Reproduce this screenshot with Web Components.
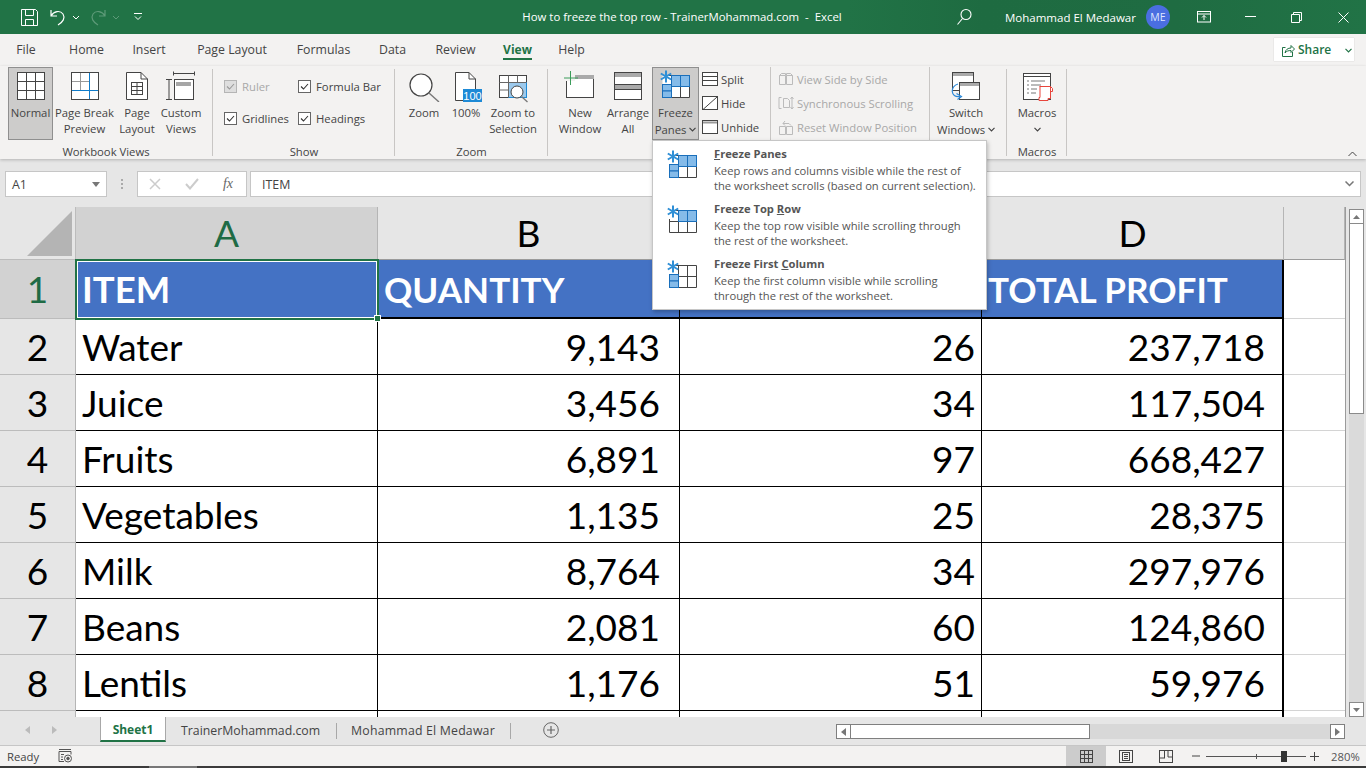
<!DOCTYPE html>
<html>
<head>
<meta charset="utf-8">
<title>How to freeze the top row</title>
<style>
  html, body { margin: 0; height: 100%; overflow: hidden; }
  body { font-family: "Open Sans", "Noto Sans", sans-serif; font-size: 12px; color: #444; background: #e6e6e6; width: 1366px; height: 768px; position: relative; }
  svg { display: block; }
</style>
</head>
<body>
<x-titlebar></x-titlebar>
<x-rtabs></x-rtabs>
<x-ribbon>
  <x-group label="Workbook Views" style="width:205px;margin-left:8px;--lr:9px">
    <x-rbtn w="45" on>
      <svg slot="icon" width="32" height="32" fill="none" stroke="#444"><rect x="2.500" y="2.500" width="27" height="27" fill="#fff"/><path d="M11.500 3v26M20.500 3v26M3 11.500h26M3 20.500h26"/></svg>
      Normal</x-rbtn>
    <x-rbtn w="61" style="margin-left:1px">
      <svg slot="icon" width="32" height="32" fill="none" stroke="#444"><rect x="2.500" y="2.500" width="27" height="27" fill="#fff"/><path d="M11.500 3v17M3 11.500h17" stroke="#999"/><path d="M20.500 3v26M3 20.500h26" stroke="#0f7bc9"/></svg>
      Page Break<br>Preview</x-rbtn>
    <x-rbtn w="44">
      <svg slot="icon" width="32" height="32" fill="none" stroke="#444"><path d="M5.500 2.500H20L26.500 9V29.500H5.500Z" fill="#fff"/><path d="M20 2.500V9H26.500"/><rect x="10.500" y="12.500" width="11" height="12"/><path d="M10.500 16.500h11M10.500 20.500h11M16 12.500v12"/></svg>
      Page<br>Layout</x-rbtn>
    <x-rbtn w="44">
      <svg slot="icon" width="32" height="32" fill="none" stroke="#444"><path d="M8.500 1.500v4M29.500 1.500v4M8.500 3.500h21M1 9.500h6M1 29.500h6M4 9.500v20"/><rect x="9.500" y="9.500" width="19" height="20" fill="#fff"/><rect x="11" y="12" width="15" height="4" fill="#a6a6a6" stroke="none"/></svg>
      Custom<br>Views</x-rbtn>
  </x-group>
  <x-group label="Show" style="width:182px">
    <x-checks></x-checks>
  </x-group>
  <x-group label="Zoom" style="width:153px;padding-left:7px">
    <x-rbtn w="44">
      <svg slot="icon" width="32" height="32" fill="none" stroke="#444"><circle cx="13" cy="15" r="11" fill="#fff" stroke-width="1.200"/><path d="M21 23l10 9" stroke="#777" stroke-width="1.400"/></svg>
      Zoom</x-rbtn>
    <x-rbtn w="40">
      <svg slot="icon" width="32" height="32" fill="none" stroke="#444" style="overflow:visible"><path d="M13 30.500H5.500V2.500H19L25.500 9V19" fill="#fff"/><path d="M19 2.500V9H25.500"/><rect x="13" y="19" width="19" height="13" fill="#1e8ad6" stroke="none"/><text x="22.500" y="29.500" text-anchor="middle" font-size="11" fill="#fff" stroke="none" font-family="Liberation Sans">100</text></svg>
      100%</x-rbtn>
    <x-rbtn w="54">
      <svg slot="icon" width="32" height="32" fill="none" stroke="#444" style="overflow:visible"><rect x="2.500" y="5.500" width="27" height="22" fill="#fff"/><rect x="11.500" y="12.500" width="18" height="15" fill="#9cc9ec" stroke="#1e8ad6"/><path d="M2.500 12.500h27M2.500 20h9M11.500 5.500v22M20.500 5.500v7" stroke="#666"/><circle cx="20" cy="22" r="6" fill="#fff"/><path d="M24.500 26.500l6 5.500" stroke="#777" stroke-width="1.300"/></svg>
      Zoom to<br>Selection</x-rbtn>
  </x-group>
  <x-group label="" style="width:459px;padding-left:8px">
    <x-rbtn w="48">
      <svg slot="icon" width="32" height="32" fill="none" stroke="#444"><rect x="2.500" y="5.500" width="27" height="22" fill="#fff"/><rect x="11" y="5" width="19" height="4" fill="#aaa" stroke="none"/><rect x="0" y="0" width="11" height="11" fill="#f3f2f1" stroke="none"/><path d="M6.500 1v14M0 8h14" stroke="#3b9c5a"/></svg>
      New<br>Window</x-rbtn>
    <x-rbtn w="48">
      <svg slot="icon" width="32" height="32" fill="none" stroke="#444"><rect x="2.500" y="2.500" width="27" height="27" fill="#fff"/><rect x="3" y="3" width="26" height="4" fill="#aaa" stroke="none"/><rect x="3" y="15" width="26" height="4" fill="#aaa" stroke="none"/><path d="M3 14.500h26M3 19.500h26"/></svg>
      Arrange<br>All</x-rbtn>
    <x-rbtn w="47" on id="freeze"><x-freeze-icon slot="icon" kind="both"></x-freeze-icon>Freeze<br>Panes <x-chev></x-chev></x-rbtn>
    <x-small-col style="width:68px;padding-left:3px;border-right:1px solid #c8c6c4;height:78px">
      <x-sbtn label="Split"><svg slot="icon" width="16" height="14" fill="none" stroke="#444"><rect x=".5" y=".5" width="15" height="13" fill="#fff"/><path d="M1 4.500h14M1 8.500h14"/></svg></x-sbtn>
      <x-sbtn label="Hide"><svg slot="icon" width="16" height="14" fill="none" stroke="#444"><rect x=".5" y=".5" width="15" height="13" fill="#fff"/><path d="M1 13.500L15 1"/></svg></x-sbtn>
      <x-sbtn label="Unhide"><svg slot="icon" width="16" height="14" fill="none" stroke="#444"><rect x=".5" y=".5" width="15" height="13" fill="#fff"/><path d="M1 2.500h14" stroke="#999" stroke-width="2"/></svg></x-sbtn>
    </x-small-col>
    <x-small-col style="width:151px;padding-left:7px;border-right:1px solid #c8c6c4;height:78px;color:#a8a8a8">
      <x-sbtn label="View Side by Side" off><svg slot="icon" width="16" height="14" fill="none" stroke="#bbb"><path d="M1.500 3.500h6v9h-6zM8.500 3.500h6v9h-6zM1.500 3.500l2-2h4v2M8.500 3.500v-2h4l2 2"/></svg></x-sbtn>
      <x-sbtn label="Synchronous Scrolling" off><svg slot="icon" width="16" height="14" fill="none" stroke="#bbb"><path d="M3.500 1.500H1v11h2.500M5.500 2.500h4l2 2v7h-6zM14 1v12M12.500 3L14 1l1.500 2M12.500 11l1.500 2 1.500-2"/></svg></x-sbtn>
      <x-sbtn label="Reset Window Position" off><svg slot="icon" width="16" height="16" fill="none" stroke="#bbb"><path d="M1.500 7.500h6v8h-6zM8.500 7.500h6v8h-6zM5 4.500h6l2 2M5 4.500l2-2.500M5 4.500l2 2"/></svg></x-sbtn>
    </x-small-col>
    <x-rbtn w="60" style="margin-left:6px">
      <svg slot="icon" width="32" height="32" fill="none" stroke="#444"><rect x="2.500" y="2.500" width="21" height="18" fill="#fff"/><rect x="3" y="3" width="20" height="3" fill="#aaa" stroke="none"/><rect x="9.500" y="12.500" width="20" height="17" fill="#fff"/><rect x="10" y="13" width="19" height="3" fill="#aaa" stroke="none"/><path d="M8 14C0 16 0 28 10 26.500M6.500 23.500l5 3-4 3" stroke="#2b88d8" stroke-width="1.200"/></svg>
      Switch<br>Windows <x-chev></x-chev></x-rbtn>
  </x-group>
  <x-group label="Macros" style="width:60px;padding-left:8px">
    <x-rbtn w="44">
      <svg slot="icon" width="32" height="32" fill="none" stroke="#444"><rect x="2.500" y="3.500" width="27" height="26" fill="#fff"/><path d="M3 6.500h26" /><path d="M6 11h2M10 11h14M6 15h2M10 15h10M6 19h2M10 19h6M6 23h2M10 23h5" stroke="#777"/><path d="M18.500 16.500h11l2 2v3h-2M19 16.500v11h-1v3h9v-2h2.500v-12" fill="#fff" stroke="#e8453c"/></svg>
      Macros<br><x-chev></x-chev></x-rbtn>
  </x-group>
</x-ribbon>
<x-formula-bar name="A1" value="ITEM"></x-formula-bar>
<x-workspace></x-workspace>
<x-sheet-tabs></x-sheet-tabs>
<x-status></x-status>
<x-menu>
  <x-menu-item kind="both"><span slot="title"><u>F</u>reeze Panes</span>Keep rows and columns visible while the rest of<br>the worksheet scrolls (based on current selection).</x-menu-item>
  <x-menu-item kind="top"><span slot="title">Freeze Top <u>R</u>ow</span>Keep the top row visible while scrolling through<br>the rest of the worksheet.</x-menu-item>
  <x-menu-item kind="left"><span slot="title">Freeze First <u>C</u>olumn</span>Keep the first column visible while scrolling<br>through the rest of the worksheet.</x-menu-item>
</x-menu>

<script>
function el(name, html) {
  customElements.define(name, class extends HTMLElement {
    constructor() {
      super();
      this.attachShadow({mode: 'open'});
      this.shadowRoot.innerHTML = typeof html === 'function' ? html(this) : html;
    }
  });
}

const chevron = c => `<svg width="7" height="5" fill="none" stroke="${c}" stroke-width="1.200" style="display:inline-block;vertical-align:middle"><path d="M.5 .8L3.500 3.800 6.500 .8"/></svg>`;

el('x-chev', `<style>:host{display:inline-block;vertical-align:1px}</style>${chevron('#444')}`);

el('x-titlebar', `
<style>
  :host{display:flex;align-items:center;height:34px;color:#fff;position:relative;
    background:linear-gradient(90deg,#217346 0,#217346 62%,#1e6b41 72%,#1f6c42 86%,#217346 100%)}
  svg{display:block;flex:none}
  .title{position:absolute;left:522px;top:0;width:320px;line-height:34px;font-size:11.400px;white-space:pre;text-align:center}
  .user{font-size:11.500px;white-space:nowrap;width:141px}
  .av{width:24px;height:24px;border-radius:50%;background:#4a6ee0;font-size:10.500px;text-align:center;line-height:24px;flex:none;color:#dfe6ff}
</style>
<svg width="21" height="18" style="margin-left:19px" fill="none" stroke="#fff"><path d="M2.500 1.500H16.500L18.500 3.500V17.500H2.500ZM6.500 2V7.500H14.500V2M6.500 17V11.500H14.500V17" /></svg>
<svg width="18" height="18" style="margin-left:9px" fill="none" stroke="#fff" stroke-width="1.200"><path d="M2 2V8H8M2 8C5 3 11 2 14 6C16.500 10 14 14 9 17"/></svg>
<svg width="8" height="5" style="margin-left:5px" fill="none" stroke="#fff"><path d="M1 1L4 4 7 1"/></svg>
<svg width="18" height="18" style="margin-left:9px" fill="none" stroke="#5d9a78" stroke-width="1.200"><path d="M16 2V8H10M16 8C13 3 7 2 4 6C1.500 10 4 14 9 17"/></svg>
<svg width="8" height="5" style="margin-left:5px" fill="none" stroke="#5d9a78"><path d="M1 1L4 4 7 1"/></svg>
<svg width="8" height="8" style="margin-left:14px" fill="none" stroke="#fff"><path d="M0 .5H8M1 3.500L4 6.500 7 3.500"/></svg>
<div class="title">How to freeze the top row - TrainerMohammad.com  -  Excel</div>
<div style="flex:1"></div>
<svg width="16" height="18" fill="none" stroke="#fff" stroke-width="1.100" style="margin-right:33px"><circle cx="10" cy="6.500" r="5"/><path d="M6.500 10.500L1.500 16.500"/></svg>
<div class="user">Mohammad El Medawar</div>
<div class="av">ME</div>
<svg width="14" height="12" fill="none" stroke="#fff" style="margin-left:27px"><rect x=".5" y=".5" width="13" height="10.500"/><path d="M1 3h12M7 9V4.500M5 6.500L7 4.500 9 6.500"/></svg>
<svg width="11" height="2" style="margin-left:34px" fill="none" stroke="#fff"><path d="M0 .5H11"/></svg>
<svg width="11" height="11" style="margin-left:35px" fill="none" stroke="#fff"><path d="M.5 2.500H8.500V10.500H.5ZM2.500 2.500V.5H10.500V8.500H8.500"/></svg>
<svg width="11" height="11" style="margin-left:36px;margin-right:17px" fill="none" stroke="#fff"><path d="M.5 .5L10.500 10.500M10.500 .5L.5 10.500"/></svg>
`);

el('x-rtabs', () => {
  const tabs = [['File',52],['Home',69],['Insert',56],['Page Layout',110],['Formulas',73],['Data',65],['Review',61],['View',63],['Help',45]];
  return `
<style>
  :host{display:flex;height:32px;background:#f3f2f1;position:relative}
  div{line-height:32px;text-align:center;color:#444;font-size:12.300px;position:relative}
  .on{color:#217346;font-weight:700;font-size:12px}
  .on::after{content:"";position:absolute;left:17px;right:17px;bottom:6px;height:2px;background:#217346}
  .share{position:absolute;left:1274px;top:4px;width:80px;height:23px;background:#fff;box-shadow:0 0 1px #bbb;display:flex;align-items:center;color:#217346;font-size:12px;font-weight:600;box-sizing:border-box;padding-left:7px;gap:3px}
</style>
${tabs.map(t => `<div class="${t[0] === 'View' ? 'on' : ''}" style="width:${t[1]}px">${t[0]}</div>`).join('')}
<section class="share"><svg width="14" height="14" fill="none" stroke="#217346"><path d="M4.500 4.500H1.500V13.500H11.500V9M4 10C4.500 6.500 7 5 10 5V2.500L13.500 6 10 9.500V7.500C7.500 7.500 5.500 8 4 10Z"/></svg>Share<span style="margin-left:11px">${chevron('#217346')}</span></section>`;
});

el('x-ribbon', `
<style>
  :host{display:flex;height:93px;background:#f3f2f1;box-sizing:border-box;position:relative;box-shadow:0 1px 3px rgba(0,0,0,.22);z-index:1}
  svg{position:absolute;left:1348px;top:85px}
</style>
<slot></slot>
<svg width="9" height="6" fill="none" stroke="#444"><path d="M.5 5L4.500 1 8.500 5"/></svg>`);

el('x-group', h => `
<style>
  :host{display:block;box-sizing:border-box;position:relative;flex:none;height:93px}
  .c{display:flex;padding-top:1px;height:90px;box-sizing:border-box}
  .l{position:absolute;left:0;right:var(--lr,0);top:78px;text-align:center;font-size:11.300px;line-height:16px;color:#444}
  .s{position:absolute;right:0;top:3px;height:87px;width:1px;background:#c8c6c4}
</style>
<div class="c"><slot></slot></div>
${h.getAttribute('label') ? `<div class="l">${h.getAttribute('label')}</div>` : ''}
<div class="s"></div>`);

el('x-rbtn', h => `
<style>
  :host{display:block;width:${h.getAttribute('w')}px;height:73px;box-sizing:border-box;flex:none;text-align:center;font-size:11.300px;line-height:16px;color:#444;white-space:nowrap;
    ${h.hasAttribute('on') ? 'background:#cdcccb;outline:1px solid #8f8f8f;outline-offset:-1px;' : ''}}
  .i{display:flex;justify-content:center;padding-top:3px;height:38px;box-sizing:border-box;}
</style>
<div class="i"><slot name="icon"></slot></div>
<slot></slot>`);

el('x-checks', () => {
  const ck = (label, off) => `<label style="color:${off ? '#a8a8a8' : '#444'}"><svg width="13" height="13" fill="${off ? '#dedede' : '#fff'}" stroke="${off ? '#b5b5b5' : '#666'}"><rect x=".5" y=".5" width="12" height="12"/><path d="M3 6.500L5.500 9 10 4" fill="none" stroke="${off ? '#999' : '#333'}" stroke-width="1.100"/></svg><span>${label}</span></label>`;
  return `
<style>
  :host{display:grid;grid-template-columns:74px auto;grid-auto-rows:32px;padding:3px 0 0 11px;align-items:center;height:64px;font-size:11.300px}
  label{display:flex;align-items:center;gap:5px;white-space:nowrap}
  svg{display:block}
</style>
${ck('Ruler', true)}${ck('Formula Bar')}${ck('Gridlines')}${ck('Headings')}`;
});

el('x-small-col', `<style>:host{display:flex;flex-direction:column;flex:none;box-sizing:content-box}</style><slot></slot>`);

el('x-sbtn', h => `
<style>
  :host{display:flex;align-items:center;height:24px;gap:3px;font-size:11.300px;white-space:nowrap;color:${h.hasAttribute('off') ? '#a8a8a8' : '#444'}}
  ::slotted(svg){display:block;flex:none}
</style>
<slot name="icon"></slot><span>${h.getAttribute('label')}</span>`);

el('x-freeze-icon', h => {
  const k = h.getAttribute('kind');
  const bl = '#85bbe9', ln = '#1a6fbb', dk = '#444';
  const top = k === 'both' || k === 'top', left = k === 'both' || k === 'left';
  return `
<style>:host{display:block;width:32px;height:32px}svg{display:block}</style>
<svg width="32" height="32" fill="none">
  <rect x="2.500" y="5.500" width="27" height="22" fill="#fff" stroke="none"/>
  <path d="M2.500 16.500h27M2.500 27.500h27M29.500 5.500v22M2.500 14v13.500M11.500 5.500v22M20.500 5.500v22M9 5.500h20.500" stroke="${dk}"/>
  ${top ? `<rect x="11.500" y="5.500" width="9" height="11" fill="${bl}" stroke="${ln}"/><rect x="20.500" y="5.500" width="9" height="11" fill="${bl}" stroke="${ln}"/>` : ''}
  ${left ? `<rect x="2.500" y="14.500" width="9" height="6.500" fill="${bl}" stroke="${ln}"/><rect x="2.500" y="21" width="9" height="6.500" fill="${bl}" stroke="${ln}"/>` : ''}
  <path d="M6 .5v12M.8 3.500l10.400 6M.8 9.500l10.400-6" stroke="#2f8fd6" stroke-width="2"/>
</svg>`;
});

el('x-formula-bar', h => `
<style>
  :host{display:flex;height:48px;box-sizing:border-box;padding:12px 5px 10px 5px;background:#e6e6e6;font-size:12.400px;color:#444}
  .b{background:#fff;border:1px solid #c6c6c6;box-sizing:border-box;height:26px;display:flex;align-items:center}
  .name{width:102px;padding-left:6px;justify-content:space-between;padding-right:6px}
  .dots{width:30px;display:flex;flex-direction:column;align-items:center;justify-content:center;gap:2px}
  .dots i{width:2px;height:2px;background:#aaa;display:block}
  .fx{width:110px;justify-content:space-between;padding:0 13px 0 11px;font-family:"Liberation Serif",serif;font-style:italic;font-size:14px;color:#666;margin-right:3px}
  .v{flex:1;padding:0 6px 0 11px;justify-content:space-between}
</style>
<div class="b name"><span>${h.getAttribute('name')}</span><svg width="8" height="5"><path d="M0 0H8L4 5Z" fill="#777"/></svg></div>
<div class="dots"><i></i><i></i><i></i></div>
<div class="b fx"><svg width="12" height="12" fill="none" stroke="#ccc" stroke-width="1.500"><path d="M1 1L11 11M11 1L1 11"/></svg><svg width="14" height="12" fill="none" stroke="#ccc" stroke-width="2"><path d="M1 6L5 10.500 13 1"/></svg><span>fx</span></div>
<div class="b v"><span>${h.getAttribute('value')}</span><svg width="9" height="6" fill="none" stroke="#777" stroke-width="1.500"><path d="M.5 .5L4.500 4.500 8.500 .5"/></svg></div>`);

el('x-workspace', `
<style>
  :host{display:flex;height:510px;background:#e6e6e6}
  .bar{width:15px;margin:2px 0 0 3px;display:flex;flex-direction:column;background:#dadada;flex:none}
  .btn{height:15px;background:#fff;border:1px solid #8a8a8a;box-sizing:border-box;display:flex;align-items:center;justify-content:center;flex:none}
  .th{height:190px;background:#fff;border:1px solid #8a8a8a;border-top-width:0;box-sizing:border-box;flex:none}
</style>
<x-sheet></x-sheet>
<div class="bar">
  <div class="btn"><svg width="7" height="4"><path d="M0 4H7L3.500 0Z" fill="#777"/></svg></div>
  <div class="th"></div>
  <div style="flex:1"></div>
  <div class="btn"><svg width="7" height="4"><path d="M0 0H7L3.500 4Z" fill="#777"/></svg></div>
</div>`);

el('x-sheet', () => {
  const rows = [['Water','9,143','26','237,718'],['Juice','3,456','34','117,504'],['Fruits','6,891','97','668,427'],['Vegetables','1,135','25','28,375'],['Milk','8,764','34','297,976'],['Beans','2,081','60','124,860'],['Lentils','1,176','51','59,976'],['','','','']];
  let h = `<div class="corner"><svg width="75" height="52"><path d="M27 49L72 4V49Z" fill="#b4b4b4"/></svg></div>`;
  // column C's header and title sit under the open menu, so they stay empty
  ['A','B','','D',''].forEach((c, i) => h += `<div class="ch${i === 0 ? ' sel' : ''}">${c}</div>`);
  h += `<div class="rh sel">1</div><div class="c hd a1">ITEM</div><div class="c hd">QUANTITY</div><div class="c hd"></div><div class="c hd last">TOTAL PROFIT</div><div class="c e"></div>`;
  rows.forEach((r, i) => {
    h += `<div class="rh">${r[0] ? i + 2 : ''}</div><div class="c t">${r[0]}</div><div class="c n b">${r[1]}</div><div class="c n m">${r[2]}</div><div class="c n last">${r[3]}</div><div class="c e"></div>`;
  });
  return `
<style>
  :host{display:grid;grid-template-columns:76px 302px 302px 302px 302px 61px;grid-template-rows:53px 59px repeat(8,56px);
    width:1346px;height:510px;overflow:hidden;flex:none;font-family:"Lato","Open Sans",sans-serif;color:#000;font-size:37px;box-sizing:border-box;border-right:1px solid #9b9b9b}
  .corner{background:#e6e6e6;border-right:1px solid #bcbcbc;border-bottom:1px solid #bcbcbc;box-sizing:border-box}
  .ch{background:#e6e6e6;border-right:1px solid #b5b5b5;box-sizing:border-box;text-align:center;line-height:51px;border-bottom:1px solid #9b9b9b}
  .ch.sel{background:#d2d2d2;color:#1f6b45}
  .rh{background:#e6e6e6;border-right:1px solid #b5b5b5;border-bottom:1px solid #bcbcbc;box-sizing:border-box;text-align:center;line-height:56px}
  .rh.sel{background:#d2d2d2;color:#1f6b45;line-height:58px}
  .c{box-sizing:border-box;background:#fff;line-height:56px;white-space:nowrap;border-right:1px solid #000;border-bottom:1px solid #000;position:relative}
  .t{padding-left:6px}
  .n{text-align:right;padding-right:17px}
  .n.b{padding-right:19px}
  .n.m{padding-right:6px}
  .hd{background:#4472c4;color:#fff;font-weight:700;font-size:35.100px;padding-left:6px;line-height:58px;border-bottom:2px solid #000}
  .hd.a1{font-size:36.500px}
  .last{border-right:2px solid #000}
  .e{border-right:0;border-bottom:1px solid #d4d4d4}
  .a1{outline:2px solid #217346;outline-offset:-1px;box-shadow:inset 0 0 0 2px #fff;z-index:2;border:0}
  .a1::after{content:"";position:absolute;right:-3px;bottom:-3px;width:5px;height:5px;background:#217346;border:1px solid #fff;box-sizing:content-box;}
</style>${h}`;
});

el('x-sheet-tabs', `
<style>
  :host{display:flex;height:28px;background:#e6e6e6;position:relative;font-size:12.300px;color:#444;align-items:flex-start}
  .nav{width:100px;height:25px;display:flex;align-items:center;padding-left:25px;gap:22px;box-sizing:border-box;flex:none}
  .on{width:66px;height:25px;background:#fff;border:1px solid #a8a8a8;border-width:0 1px;border-bottom:2px solid #217346;box-sizing:border-box;text-align:center;line-height:26px;color:#217346;font-weight:700;flex:none;font-size:12px}
  .t{height:16px;margin-top:6px;line-height:16px;padding:0 16px 0 15px;border-right:1px solid #a8a8a8;flex:none;white-space:nowrap}
  .scroll{position:absolute;left:836px;top:7px;width:509px;height:15px;background:#d8d8d8;display:flex}
  .sb{width:15px;height:15px;background:#fff;border:1px solid #7f7f7f;box-sizing:border-box;flex:none;display:flex;align-items:center;justify-content:center}
  .th{width:239px;background:#fff;border:1px solid #7f7f7f;border-left:0;box-sizing:border-box}
</style>
<div class="nav"><svg width="5" height="8"><path d="M5 0V8L0 4Z" fill="#bbb"/></svg><svg width="5" height="8"><path d="M0 0V8L5 4Z" fill="#bbb"/></svg></div>
<div class="on">Sheet1</div>
<div class="t">TrainerMohammad.com</div>
<div class="t" style="padding-left:14px;padding-right:15px;letter-spacing:.2px">Mohammad El Medawar</div>
<svg width="16" height="16" fill="none" stroke="#666" style="margin:5px 0 0 32px"><circle cx="8" cy="8" r="7.300"/><path d="M8 4v8M4 8h8" stroke-width="1.200"/></svg>
<div class="scroll">
  <div class="sb"><svg width="5" height="8"><path d="M5 0V8L0 4Z" fill="#777"/></svg></div>
  <div class="th"></div><div style="flex:1"></div>
  <div class="sb"><svg width="5" height="8"><path d="M0 0V8L5 4Z" fill="#777"/></svg></div>
</div>`);

el('x-status', `
<style>
  :host{display:flex;height:23px;box-sizing:border-box;background:#f3f2f1;border-top:1px solid #c6c6c6;border-bottom:2px solid #3b3b3b;font-size:11.300px;color:#444;align-items:center;position:relative}
  .v{height:20px;width:40px;display:flex;align-items:center;justify-content:center;flex:none}
  .lite{position:absolute;left:149px;width:48px;bottom:-2px;height:2px;background:#777}
</style>
<span style="margin-left:7px;width:51px">Ready</span>
<svg width="14" height="14" fill="none" stroke="#555"><path d="M1 .5h12M1 2.500h12v3M1 2.500v10h5M3 5.500h3M3 8h2M3 10.500h2"/><circle cx="10" cy="9.500" r="3.500"/><circle cx="10" cy="9.500" r="1.300" fill="#555"/></svg>
<div style="flex:1"></div>
<div class="v" style="background:#ccc"><svg width="13" height="13" fill="none" stroke="#444"><rect x=".5" y=".5" width="12" height="12"/><path d="M4.500 1v11M8.500 1v11M1 4.500h11M1 8.500h11"/></svg></div>
<div class="v"><svg width="14" height="13" fill="none" stroke="#444"><rect x=".5" y=".5" width="13" height="12"/><rect x="3.500" y="2.500" width="7" height="8"/><path d="M5 4.500h4M5 6.500h4M5 8.500h4" /></svg></div>
<div class="v"><svg width="14" height="13" fill="none" stroke="#444"><rect x=".5" y=".5" width="13" height="12"/><path d="M5.500 1v7M1 8h5M9 1v6h4.500"/></svg></div>
<svg width="8" height="2" style="margin-left:6px"><path d="M0 1H8" stroke="#444"/></svg>
<div style="margin-left:6px;width:100px;height:1px;background:#555;position:relative;flex:none">
  <i style="position:absolute;left:50px;top:-2px;width:1px;height:5px;background:#555"></i>
  <i style="position:absolute;left:75px;top:-5px;width:6px;height:11px;background:#333"></i>
</div>
<svg width="9" height="9" style="margin-left:4px"><path d="M4.500 0V9M0 4.500H9" stroke="#444"/></svg>
<span style="margin:0 8px 0 12px;width:27px;color:#555;text-align:right;white-space:nowrap">280%</span>
<div class="lite"></div>`);

el('x-menu', `
<style>
  :host{display:block;position:absolute;left:652px;top:140px;width:335px;height:170px;background:#fff;border:1px solid #c6c6c6;box-sizing:border-box;box-shadow:1px 2px 4px rgba(0,0,0,.25);z-index:5;padding-top:3px}
</style>
<slot></slot>`);

el('x-menu-item', h => `
<style>
  :host{display:flex;height:55px;box-sizing:border-box;color:#555;font-size:11.200px;line-height:15px;white-space:nowrap}
  .i{width:61px;padding:6px 0 0 14px;box-sizing:border-box;flex:none}
  .tt{font-weight:700;color:#555;font-size:11.200px;line-height:16px;margin-bottom:1px;padding-top:2px}
</style>
<div class="i"><x-freeze-icon kind="${h.getAttribute('kind')}"></x-freeze-icon></div>
<div><div class="tt"><slot name="title"></slot></div><slot></slot></div>`);
</script>
</body>
</html>
